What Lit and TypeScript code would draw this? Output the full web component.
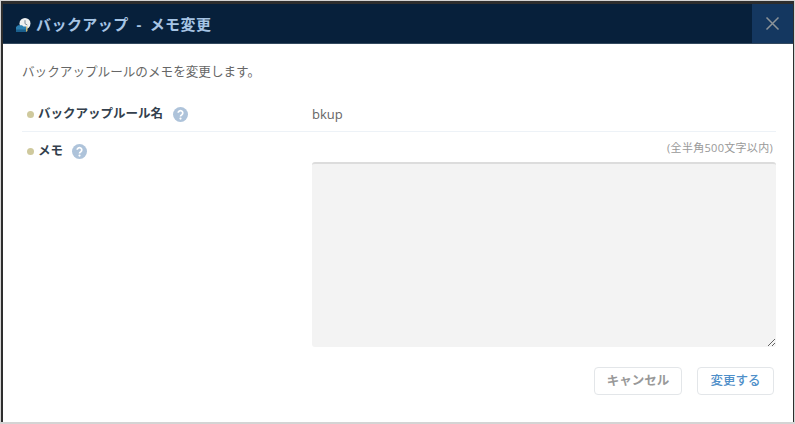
import { LitElement, html, css } from "lit";
import { customElement } from "lit/decorators.js";

@customElement("app-root")
export class AppRoot extends LitElement {
  static styles = css`
    :host {
      display: block;
      width: 795px;
      height: 424px;
      background: #d4d4d4;
      overflow: hidden;
      font-family: "Open Sans", "Noto Sans CJK JP", sans-serif;
    }
    .frame {
      box-sizing: border-box;
      width: 795px;
      height: 424px;
      padding: 1px 1px 2px 1px;
      background: #d4d4d4;
    }
    .backdrop {
      box-sizing: border-box;
      height: 100%;
      background: #2e2e2e;
      padding: 3px 1px 0 2px;
    }
    .dialog {
      height: 100%;
      display: flex;
      flex-direction: column;
      background: #fff;
    }
    .head {
      height: 39px;
      flex: none;
      display: flex;
      align-items: center;
      background: #07203b;
      border-bottom: 1px solid #33495f;
    }
    .logo {
      width: 18px;
      height: 16px;
      margin: 3px 0 0 12px;
      flex: none;
    }
    .title {
      flex: 1;
      margin-left: 3px;
      font-size: 15px;
      font-weight: 700;
      color: #a6c4e4;
      line-height: 20px;
      letter-spacing: 0.45px;
      word-spacing: 3.5px;
    }
    .close {
      width: 41px;
      height: 100%;
      flex: none;
      display: flex;
      align-items: center;
      justify-content: center;
      background: #143760;
    }
    .body {
      flex: 1;
      display: flex;
      flex-direction: column;
      padding: 0 17px 0 19px;
    }
    .lead {
      margin-top: 19px;
      font-size: 12.6px;
      line-height: 18px;
      color: #666;
    }
    .row {
      display: flex;
    }
    .row.name {
      margin-top: 16px;
      height: 34px;
      align-items: center;
      border-bottom: 1px solid #edf2f7;
    }
    .label {
      width: 290px;
      flex: none;
      display: flex;
      align-items: center;
      font-size: 12.5px;
      font-weight: 700;
      color: #333f4d;
      line-height: 18px;
    }
    .dot {
      width: 7px;
      height: 7px;
      border-radius: 50%;
      background: #cfc99d;
      margin: 0 4px 0 5px;
      flex: none;
    }
    .help {
      width: 15px;
      height: 15px;
      margin-left: 10px;
      flex: none;
    }
    .row.memo .help {
      margin-left: 9px;
    }
    .value {
      font-size: 13px;
      color: #666;
    }
    .row.memo {
      flex: 1;
      align-items: flex-start;
    }
    .row.memo .label {
      margin-top: 10px;
    }
    .memo-field {
      flex: 1;
      display: flex;
      flex-direction: column;
    }
    .hint {
      text-align: right;
      font-size: 11px;
      letter-spacing: 0.3px;
      line-height: 14px;
      color: #999;
      margin-top: 9px;
      padding-right: 3px;
    }
    textarea {
      display: block;
      box-sizing: border-box;
      width: 100%;
      height: 185px;
      margin-top: 7px;
      background: #f3f3f3;
      border: none;
      border-top: 2px solid #dcdcdc;
      border-radius: 3px;
      outline: none;
      padding: 6px;
    }
    .actions {
      display: flex;
      justify-content: flex-end;
      gap: 15px;
      margin-top: 20px;
      padding-right: 2px;
    }
    button {
      height: 28px;
      padding: 0;
      box-sizing: border-box;
      background: #fff;
      border: 1px solid #e3e6e9;
      border-radius: 4px;
      font-family: inherit;
      font-size: 12.5px;
      line-height: 18px;
    }
    .cancel {
      width: 88px;
      color: #999;
      font-weight: 700;
    }
    .ok {
      width: 77px;
      color: #4f8fc9;
      font-weight: 500;
    }
  `;

  private help() {
    return html`<svg class="help" viewBox="0 0 15 15" aria-hidden="true">
      <circle cx="7.5" cy="7.5" r="7.5" fill="#aec3da"></circle>
      <path d="M5.2 5.8a2.3 2.2 0 1 1 3.6 1.9c-.8.5-1.3.9-1.3 1.8" fill="none" stroke="#fff" stroke-width="1.7"></path>
      <circle cx="7.5" cy="11.6" r="1.1" fill="#fff"></circle>
    </svg>`;
  }

  render() {
    return html`<div class="frame"><div class="backdrop"><div class="dialog">
      <div class="head">
        <svg class="logo" viewBox="0 0 18 16" aria-hidden="true">
          <circle cx="10" cy="6.5" r="5.5" fill="#eef0f0"></circle>
          <path d="M10 3.2v3.5l2.3 1.3" fill="none" stroke="#7a8894" stroke-width="1"></path>
          <path d="M1 10 3 8.2h4l1.5 1.3H11V15H1z" fill="#2b7fb0"></path>
          <path d="M1 12.5h10V15H1z" fill="#1a5f8c"></path>
          <path d="M11 9.5h1.5v4.5L11 15z" fill="#c9b878"></path>
        </svg>
        <div class="title">バックアップ - メモ変更</div>
        <div class="close">
          <svg width="15" height="15" viewBox="0 0 15 15" aria-hidden="true">
            <path d="M1.5 1.5l12 12M13.5 1.5l-12 12" stroke="#8d9499" stroke-width="1.5" fill="none"></path>
          </svg>
        </div>
      </div>
      <div class="body">
        <div class="lead">バックアップルールのメモを変更します。</div>
        <div class="row name">
          <div class="label"><span class="dot"></span>バックアップルール名${this.help()}</div>
          <div class="value">bkup</div>
        </div>
        <div class="row memo">
          <div class="label"><span class="dot"></span>メモ${this.help()}</div>
          <div class="memo-field">
            <div class="hint">(全半角500文字以内)</div>
            <textarea></textarea>
            <div class="actions">
              <button class="cancel">キャンセル</button>
              <button class="ok">変更する</button>
            </div>
          </div>
        </div>
      </div>
    </div></div></div>`;
  }
}
